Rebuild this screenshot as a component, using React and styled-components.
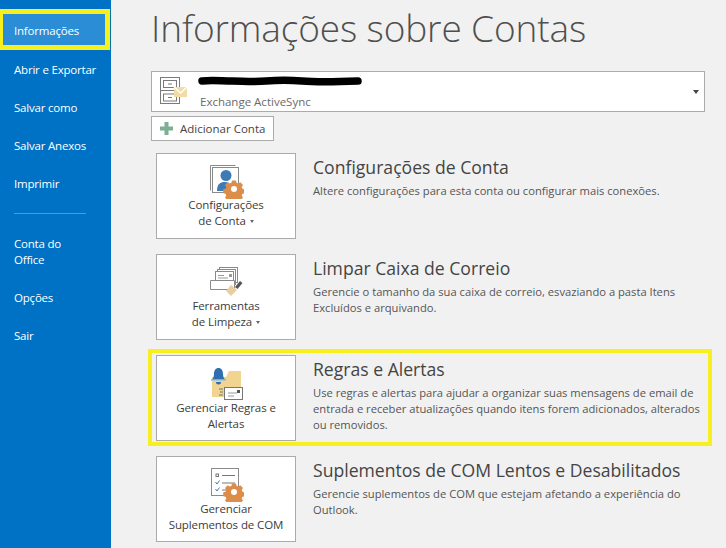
import React from 'react';
import styled, { createGlobalStyle } from 'styled-components';

const GlobalStyle = createGlobalStyle`
	html, body {
		margin: 0;
		padding: 0;
		background: #f1f1f1;
	}
	body {
		font-family: 'Open Sans', 'Noto Sans', sans-serif;
	}
`;

const Gear = ({ x, y }) => (
	<g transform={`translate(${x} ${y})`} fill="#dc8d4a">
		<path d="M-2 -8.500h4l.5 2.300 1.800.8 2-1.300 2.700 2.700-1.300 2 .8 1.800 2.300.5v4l-2.300.5-.8 1.800 1.300 2-2.700 2.700-2-1.300-1.800.8-.5 2.300h-4l-.5-2.300-1.800-.8-2 1.300-2.700-2.700 1.300-2-.8-1.800-2.300-.5v-4l2.300-.5.8-1.800-1.300-2 2.700-2.700 2 1.300 1.800-.8z" />
		<circle r="3" fill="#fff" />
	</g>
);

const AccountIcon = () => (
	<svg width="34" height="32" viewBox="0 0 34 32">
		<g fill="none" stroke="#7a7a7a">
			<rect x=".5" y="1.500" width="19" height="26" fill="#fff" />
			<path d="M.5 14.500h19" />
			<rect x="3.500" y="4.500" width="13" height="7" />
			<rect x="3.500" y="18" width="13" height="7" />
			<path d="M8 8h4M8 21.500h4" />
		</g>
		<path d="M14 11h13v10H14z" fill="#f2dca6" />
		<path d="M14 11l6.500 6 6.500-6" fill="none" stroke="#fff" strokeWidth="1.500" />
	</svg>
);

const ConfigIcon = () => (
	<svg width="34" height="34" viewBox="0 0 34 34">
		<path d="M.5 .5h25M.5 .5v25" stroke="#8a8a8a" fill="none" />
		<rect x="2.500" y="2.500" width="26" height="25" fill="#fff" stroke="#8a8a8a" />
		<circle cx="16" cy="10.500" r="5.500" fill="#3f7ab5" />
		<path d="M7 26c0-7 3-9 8-9s6 3 6 9z" fill="#3f7ab5" />
		<Gear x={24} y={24} />
	</svg>
);

const CleanIcon = () => (
	<svg width="34" height="34" viewBox="0 0 34 34">
		<g fill="#fff" stroke="#8a8a8a">
			<rect x="9.500" y="1.500" width="18" height="15" />
			<rect x="7.500" y="3.500" width="18" height="15" />
			<rect x="5.500" y="5.500" width="18" height="15" />
			<path d="M.5 14.500h24v9H.5z" />
		</g>
		<path d="M8 12h10M8 9.500h6" stroke="#9a9a9a" />
		<rect x="19" y="8" width="3" height="3" fill="#9a9a9a" />
		<path d="M25 21l5-6 2.500 2-5 6z" fill="#555" />
		<path d="M21 19l6 5-6 6-5-5z" fill="#e9cf9f" />
	</svg>
);

const RulesIcon = () => (
	<svg width="34" height="36" viewBox="0 0 34 36">
		<path d="M2 10h14l3-6h12v26H2z" fill="#f0d490" />
		<path d="M5 13h-4c2-1 3-3 3-6 0-4 2-6 4.500-6S13 3 13 7c0 3 1 5 3 6h-4z" fill="#2f6fb0" />
		<path d="M1 13h15" stroke="#9ec0dd" strokeWidth="1.500" />
		<path d="M6 15a2.500 2.500 0 0 0 5 0z" fill="#2f6fb0" />
		<rect x="14.500" y="20.500" width="18" height="12" fill="#fff" stroke="#777" />
		<path d="M18 26h9M18 29h6" stroke="#999" />
		<rect x="27" y="23" width="3" height="3" fill="#555" />
		<path d="M9 22h4M10 25h3M9 28h4" stroke="#777" />
	</svg>
);

const AddinIcon = () => (
	<svg width="34" height="34" viewBox="0 0 34 34">
		<rect x="1.500" y=".5" width="27" height="27" fill="#fff" stroke="#8a8a8a" />
		<rect x="6" y="6" width="2.500" height="2.500" fill="none" stroke="#777" />
		<path d="M12 7.500h13M12 15h13M12 22h7" stroke="#777" />
		<path d="M5.500 14l1.500 2 2.500-3.500M5.500 21l1.500 2 2.500-3.500" stroke="#3f7ab5" fill="none" />
		<Gear x={24} y={24} />
	</svg>
);

const NAV_ITEMS = [
	{ label: 'Informações', active: true },
	{ label: 'Abrir e Exportar' },
	{ label: 'Salvar como' },
	{ label: 'Salvar Anexos' },
	{ label: 'Imprimir' },
];

const NAV_BOTTOM = [
	{ label: 'Conta do Office', tall: true },
	{ label: 'Opções' },
	{ label: 'Sair' },
];

const SECTIONS = [
	{
		icon: <ConfigIcon />,
		button: ['Configurações', 'de Conta'],
		caret: true,
		title: 'Configurações de Conta',
		text: ['Altere configurações para esta conta ou configurar mais conexões.'],
	},
	{
		icon: <CleanIcon />,
		button: ['Ferramentas', 'de Limpeza'],
		caret: true,
		title: 'Limpar Caixa de Correio',
		text: [
			'Gerencie o tamanho da sua caixa de correio, esvaziando a pasta Itens',
			'Excluídos e arquivando.',
		],
	},
	{
		icon: <RulesIcon />,
		button: ['Gerenciar Regras e', 'Alertas'],
		title: 'Regras e Alertas',
		marked: true,
		text: [
			'Use regras e alertas para ajudar a organizar suas mensagens de email de',
			'entrada e receber atualizações quando itens forem adicionados, alterados',
			'ou removidos.',
		],
	},
	{
		icon: <AddinIcon />,
		button: ['Gerenciar', 'Suplementos de COM'],
		title: 'Suplementos de COM Lentos e Desabilitados',
		text: [
			'Gerencie suplementos de COM que estejam afetando a experiência do',
			'Outlook.',
		],
	},
];

const App = () => {
	return (
		<Page>
			<GlobalStyle />
			<Sidebar>
				{NAV_ITEMS.map((item) => (
					<NavItem key={item.label} $active={item.active}>
						<NavLabel $active={item.active}>{item.label}</NavLabel>
					</NavItem>
				))}
				<NavDivider />
				{NAV_BOTTOM.map((item) => (
					<NavItem key={item.label} $tall={item.tall}>
						<NavLabel $tall={item.tall}>{item.label}</NavLabel>
					</NavItem>
				))}
			</Sidebar>
			<Main>
				<Title>Informações sobre Contas</Title>
				<AccountBox>
					<AccountIconWrap>
						<AccountIcon />
					</AccountIconWrap>
					<AccountText>
						<Scribble viewBox="0 0 164 10" preserveAspectRatio="none">
							<path
								d="M4 5c10-1 20 0 30 0s22 1 34 0 24-1 36 0 30 1 56 0"
								stroke="#000"
								strokeWidth="7.500"
								strokeLinecap="round"
								fill="none"
							/>
						</Scribble>
						<AccountType>Exchange ActiveSync</AccountType>
					</AccountText>
					<Caret />
				</AccountBox>
				<AddButton>
					<svg width="13" height="13" viewBox="0 0 13 13">
						<path d="M4.500 0h4v4.500H13v4H8.500V13h-4V8.500H0v-4h4.500z" fill="#7fae95" />
					</svg>
					Adicionar Conta
				</AddButton>
				<Sections>
					{SECTIONS.map((section) => (
						<Section key={section.title} $marked={section.marked}>
							<ActionButton>
								<ActionIcon $caret={section.caret}>{section.icon}</ActionIcon>
								{section.button.map((line, i) => (
									<ActionLine key={line}>
										{line}
										{section.caret && i === 1 && <SmallCaret />}
									</ActionLine>
								))}
							</ActionButton>
							<SectionBody>
								<SectionTitle>{section.title}</SectionTitle>
								{section.text.map((line) => (
									<SectionText key={line}>{line}</SectionText>
								))}
							</SectionBody>
						</Section>
					))}
				</Sections>
			</Main>
		</Page>
	);
};

export default App;

const Page = styled.div`
	display: flex;
	width: 726px;
	height: 548px;
	overflow: hidden;
	background-color: #f1f1f1;
`;

const Sidebar = styled.nav`
	box-sizing: border-box;
	width: 111px;
	flex-shrink: 0;
	padding-top: 9px;
	background-color: #0072c6;
`;

const NavItem = styled.div`
	box-sizing: border-box;
	display: flex;
	align-items: center;
	height: ${(p) => (p.$tall ? '54px' : '38px')};
	${(p) =>
		p.$active &&
		`
		width: 110px;
		height: 41px;
		margin-bottom: 1px;
		padding-top: 3px;
		border: 5px solid #f7ef1e;
		border-left-width: 3px;
		background-color: #2a8dd6;
	`}
`;

const NavLabel = styled.span`
	padding-left: ${(p) => (p.$active ? '11px' : '14px')};
	color: #fff;
	font-size: 11.500px;
	letter-spacing: -0.2px;
	line-height: 16px;
	width: ${(p) => (p.$tall ? '70px' : 'auto')};
`;

const NavDivider = styled.div`
	width: 72px;
	height: 1px;
	margin: 10px 0 11px 14px;
	background-color: #4c9bd6;
`;

const Main = styled.main`
	flex: 1;
	min-width: 0;
	padding-left: 40px;
`;

const Title = styled.h1`
	box-sizing: border-box;
	height: 71px;
	margin: 0;
	padding-top: 3px;
	color: #4f4f4f;
	font-size: 37px;
	font-weight: 300;
	letter-spacing: -0.13px;
	line-height: 50px;
	white-space: nowrap;
`;

const AccountBox = styled.div`
	box-sizing: border-box;
	position: relative;
	display: flex;
	align-items: center;
	width: 554px;
	height: 41px;
	border: 1px solid #ababab;
	background-color: #fff;
`;

const AccountIconWrap = styled.div`
	box-sizing: border-box;
	display: flex;
	width: 47px;
	padding-left: 8px;
`;

const AccountText = styled.div`
	display: flex;
	flex-direction: column;
	padding-top: 2px;
`;

const Scribble = styled.svg`
	display: block;
	width: 164px;
	height: 10px;
	margin-bottom: 8px;
	margin-left: -1px;
`;

const AccountType = styled.span`
	padding-left: 1px;
	color: #6a6a6a;
	font-size: 11.500px;
	line-height: 16px;
`;

const Caret = styled.span`
	position: absolute;
	right: 5px;
	top: 18px;
	border-left: 3.500px solid transparent;
	border-right: 3.500px solid transparent;
	border-top: 4px solid #444;
`;

const AddButton = styled.div`
	box-sizing: border-box;
	display: flex;
	align-items: center;
	gap: 7px;
	width: 123px;
	height: 25px;
	margin-top: 4px;
	padding-left: 8px;
	border: 1px solid #ababab;
	background-color: #fff;
	color: #444;
	font-size: 11.500px;
`;

const Sections = styled.div`
	display: flex;
	flex-direction: column;
	gap: 4px;
	margin-top: 6px;
	margin-left: -3px;
`;

const Section = styled.section`
	box-sizing: border-box;
	display: flex;
	width: 564px;
	height: 97px;
	padding: 2px 4px 1px;
	border: 4px solid ${(p) => (p.$marked ? '#f7ef1e' : 'transparent')};
`;

const ActionButton = styled.div`
	box-sizing: border-box;
	display: flex;
	flex-direction: column;
	align-items: center;
	flex-shrink: 0;
	width: 140px;
	height: 86px;
	padding-top: 11px;
	border: 1px solid #ababab;
	background-color: #fff;
`;

const ActionIcon = styled.div`
	display: flex;
	justify-content: center;
	height: 34px;
	padding-left: 2px;
	margin-bottom: ${(p) => (p.$caret ? '-2px' : '-1px')};
`;

const ActionLine = styled.div`
	display: flex;
	align-items: center;
	color: #3c3c3c;
	font-size: 11.500px;
	letter-spacing: -0.1px;
	line-height: 16px;
	white-space: nowrap;
`;

const SmallCaret = styled.span`
	margin-left: 4px;
	border-left: 2.500px solid transparent;
	border-right: 2.500px solid transparent;
	border-top: 3px solid #666;
`;

const SectionBody = styled.div`
	min-width: 0;
	padding: 2px 0 0 17px;
`;

const SectionTitle = styled.h2`
	margin: 0 0 4px;
	color: #444;
	font-size: 17.600px;
	font-weight: 400;
	line-height: 24px;
	white-space: nowrap;
`;

const SectionText = styled.p`
	margin: 0;
	color: #555;
	font-size: 11.200px;
	line-height: 16px;
	white-space: nowrap;
`;
